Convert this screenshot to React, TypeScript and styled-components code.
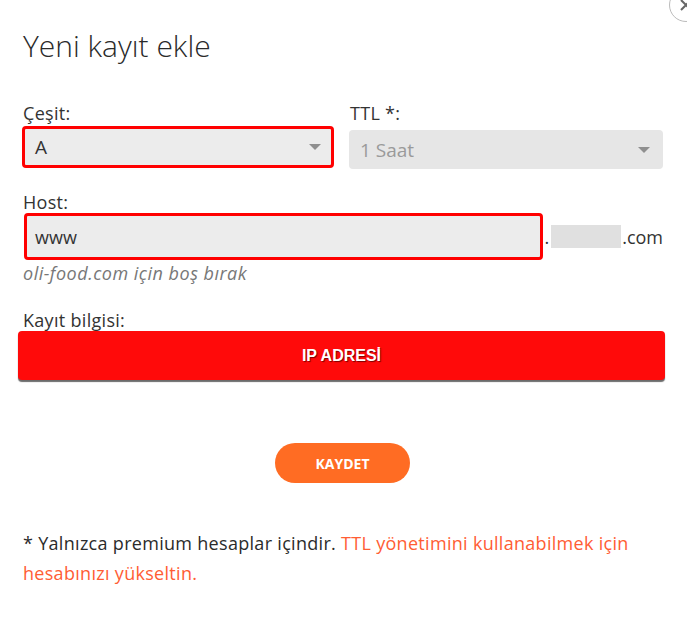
import React from "react";
import styled, { createGlobalStyle } from "styled-components";

const GlobalStyle = createGlobalStyle`
  html, body {
    margin: 0;
    padding: 0;
    background: #fff;
  }
  body {
    font-family: "Open Sans", "Liberation Sans", sans-serif;
    color: #2b2b2b;
  }
`;

const Modal = styled.div`
  position: relative;
  width: 687px;
  height: 640px;
  box-sizing: border-box;
  padding: 28px 24px 0 22px;
  background: #fff;
  overflow: hidden;
`;

const CloseButton = styled.div`
  position: absolute;
  top: -12px;
  right: -16px;
  width: 32px;
  height: 32px;
  border-radius: 50%;
  border: 1px solid #bbb;
  background: #fff;
  display: flex;
  align-items: center;
  justify-content: center;
  color: #666;
`;

const Title = styled.h2`
  margin: 0 0 0 1px;
  font-size: 30px;
  font-weight: 300;
  line-height: 36px;
  color: #2a2a2a;
`;

const Row = styled.div`
  display: grid;
  grid-template-columns: 312px 314px;
  column-gap: 15px;
  margin-top: 38px;
`;

const Field = styled.div`
  display: flex;
  flex-direction: column;
`;

const Label = styled.label`
  font-size: 18px;
  line-height: 22px;
  letter-spacing: 0.3px;
  color: #333;
  margin-left: 1px;
`;

const SelectBox = styled.div<{ $error?: boolean; $disabled?: boolean }>`
  display: flex;
  align-items: center;
  justify-content: space-between;
  box-sizing: border-box;
  height: ${({ $error }) => ($error ? "42px" : "39px")};
  margin-top: ${({ $error }) => ($error ? "2px" : "6px")};
  padding: 0 ${({ $error }) => ($error ? "10px" : "13px")} 0
    ${({ $error }) => ($error ? "10px" : "11px")};
  border: ${({ $error }) => ($error ? "3px solid #ff0000" : "none")};
  border-radius: 4px;
  background: ${({ $disabled }) => ($disabled ? "#e6e6e6" : "#ececec")};
  font-size: 19px;
  color: ${({ $disabled }) => ($disabled ? "#9a9a9a" : "#333")};
`;

const Caret = styled.span`
  width: 0;
  height: 0;
  border-left: 6px solid transparent;
  border-right: 6px solid transparent;
  border-top: 6px solid #8f8f8f;
`;

const HostBlock = styled.div`
  display: flex;
  flex-direction: column;
  margin-top: 22px;
`;

const HostRow = styled.div`
  display: flex;
  align-items: center;
`;

const HostInput = styled.div`
  box-sizing: border-box;
  width: 524px;
  height: 47px;
  margin-left: 2px;
  padding: 0 8px;
  display: flex;
  align-items: center;
  border: 3px solid #ff0000;
  border-radius: 4px;
  background: #ececec;
  font-size: 18px;
  color: #333;
`;

const Domain = styled.div`
  display: flex;
  align-items: center;
  font-size: 18px;
  color: #333;
  margin-left: 1px;
`;

const Redacted = styled.span`
  display: inline-block;
  width: 70px;
  height: 23px;
  background: #e0e0e0;
  margin: 0 1px 0 2px;
`;

const Hint = styled.div`
  font-size: 18px;
  font-style: italic;
  letter-spacing: 0.5px;
  line-height: 26px;
  color: #777;
  margin-left: 1px;
`;

const InfoBlock = styled.div`
  display: flex;
  flex-direction: column;
  margin-top: 23px;
`;

const TypeButton = styled.button`
  margin: 0 0 0 -4px;
  width: 647px;
  height: 49px;
  border: none;
  border-radius: 4px;
  background: #ff0a0a;
  box-shadow: 0 2px 1px #6b6b6b;
  color: #fff;
  font-family: "Liberation Sans", Arial, sans-serif;
  font-weight: 700;
  font-size: 16px;
  text-shadow: 1px 1px 1px #7a0000;
  cursor: pointer;
`;

const SaveRow = styled.div`
  display: flex;
  justify-content: center;
  margin-top: 63px;
`;

const SaveButton = styled.button`
  width: 135px;
  height: 40px;
  border: none;
  border-radius: 20px;
  background: #ff6c23;
  color: #fff;
  font-family: "Open Sans", sans-serif;
  font-weight: 700;
  font-size: 14px;
  cursor: pointer;
`;

const Note = styled.p`
  margin: 45px 0 0 1px;
  font-size: 18px;
  letter-spacing: 0.3px;
  line-height: 30px;
  color: #2b2b2b;
`;

const Accent = styled.span`
  color: #ff5d34;
`;

export default function App() {
  return (
    <>
      <GlobalStyle />
      <Modal>
        <CloseButton>
          <svg width="14" height="14" viewBox="0 0 14 14">
            <path d="M2 2 L12 12 M12 2 L2 12" stroke="#666" strokeWidth="2" />
          </svg>
        </CloseButton>
        <Title>Yeni kayıt ekle</Title>

        <Row>
          <Field>
            <Label>Çeşit:</Label>
            <SelectBox $error>
              <span>A</span>
              <Caret />
            </SelectBox>
          </Field>
          <Field>
            <Label>TTL *:</Label>
            <SelectBox $disabled>
              <span>1 Saat</span>
              <Caret />
            </SelectBox>
          </Field>
        </Row>

        <HostBlock>
          <Label>Host:</Label>
          <HostRow>
            <HostInput>www</HostInput>
            <Domain>
              .<Redacted />.com
            </Domain>
          </HostRow>
          <Hint>oli-food.com için boş bırak</Hint>
        </HostBlock>

        <InfoBlock>
          <Label>Kayıt bilgisi:</Label>
          <TypeButton>IP ADRESİ</TypeButton>
        </InfoBlock>

        <SaveRow>
          <SaveButton>KAYDET</SaveButton>
        </SaveRow>

        <Note>
          * Yalnızca premium hesaplar içindir.{" "}
          <Accent>TTL yönetimini kullanabilmek için hesabınızı yükseltin.</Accent>
        </Note>
      </Modal>
    </>
  );
}
